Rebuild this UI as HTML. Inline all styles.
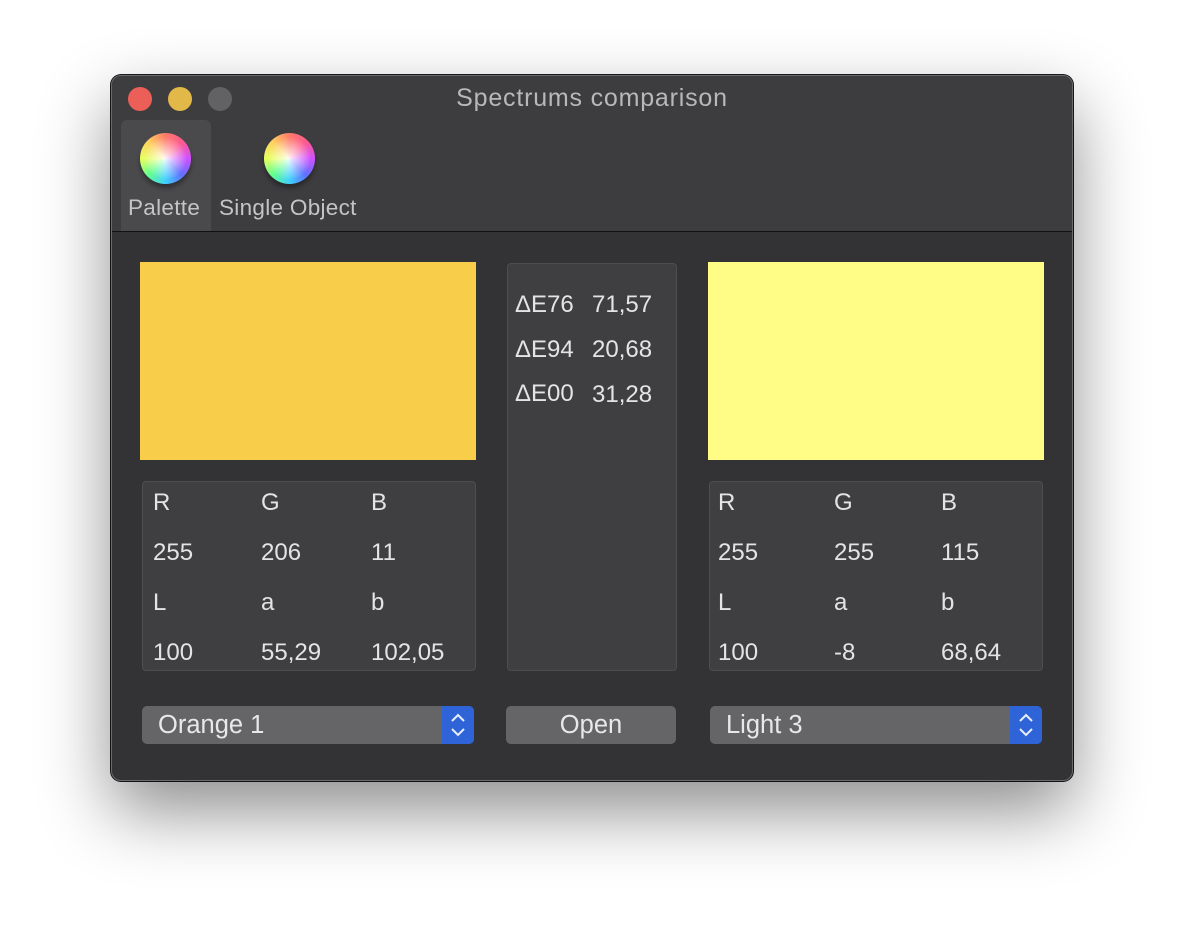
<!DOCTYPE html>
<html><head><style>
*{margin:0;padding:0;box-sizing:border-box}
body{width:1184px;height:928px;background:#fff;position:relative;overflow:hidden;font-family:"Liberation Sans",sans-serif;}
.win{position:absolute;left:111px;top:75px;width:962px;height:706px;border-radius:10px;background:#333336;border:1px solid #6a6a6c;box-shadow:0 30px 70px rgba(0,0,0,.45),0 0 0 1px #1a1a1a;overflow:hidden}
.top{position:absolute;left:0;top:0;width:100%;height:156px;background:#3d3d40;border-bottom:1px solid #111}
.dot{position:absolute;top:11px;width:24px;height:24px;border-radius:50%}
.title{position:absolute;top:8px;left:0;width:100%;text-align:center;color:#b8b8b8;font-size:25px;letter-spacing:.8px}
.tab{position:absolute;top:44px;height:111px;border-radius:6px 6px 0 0}
.ball{position:absolute;top:12px;width:51px;height:51px;border-radius:50%;background:radial-gradient(circle at 50% 50%,rgba(255,255,255,.9) 0,rgba(255,255,255,0) 60%),conic-gradient(from 0deg,#ff7a6a,#ff5a90,#d050ff,#6070ff,#40d0ff,#60ff90,#e8ff60,#ffd060,#ff7a6a);box-shadow:0 4px 5px rgba(0,0,0,.35)}
.tl{position:absolute;color:#c4c4c4;font-size:22.5px;white-space:nowrap;letter-spacing:.3px}
.sw{position:absolute;top:186px;width:336px;height:198px}
.box{position:absolute;background:#3f3f42;border:1px solid #4d4d50;border-radius:4px;color:#e4e4e4;font-size:24px}
.box span{position:absolute}
.pop{position:absolute;top:630px;height:38px;background:#656567;border-radius:5px;color:#e8e8e8;font-size:25.5px;padding:5px 0 0 16px}
.arr{position:absolute;right:0;top:0;width:32px;height:38px;background:#2e64d8;border-radius:0 5px 5px 0}
</style></head><body>
<div class="win">
<div class="top">
<div class="dot" style="left:16px;background:#ec5f58"></div>
<div class="dot" style="left:56px;background:#e2b948"></div>
<div class="dot" style="left:96px;background:#626265"></div>
<div class="title">Spectrums comparison</div>
<div class="tab" style="left:9px;width:90px;background:#4a4a4d"></div>
<div class="ball" style="left:28px;top:57px"></div>
<div class="ball" style="left:152px;top:57px"></div>
<div class="tl" style="left:16px;top:119px">Palette</div>
<div class="tl" style="left:107px;top:119px">Single Object</div>
</div>
<div class="sw" style="left:28px;background:#f7cd4a"></div>
<div class="sw" style="left:596px;background:#fffd86"></div>
<div class="box" style="left:395px;top:187px;width:170px;height:408px">
<span style="left:7px;top:27px">ΔE76</span><span style="left:84px;top:27px">71,57</span>
<span style="left:7px;top:72px">ΔE94</span><span style="left:84px;top:72px">20,68</span>
<span style="left:7px;top:116px">ΔE00</span><span style="left:84px;top:117px">31,28</span>
</div>
<div class="box" style="left:30px;top:405px;width:334px;height:190px">
<span style="left:10px;top:7px">R</span><span style="left:118px;top:7px">G</span><span style="left:228px;top:7px">B</span>
<span style="left:10px;top:57px">255</span><span style="left:118px;top:57px">206</span><span style="left:228px;top:57px">11</span>
<span style="left:10px;top:107px">L</span><span style="left:118px;top:107px">a</span><span style="left:228px;top:107px">b</span>
<span style="left:10px;top:157px">100</span><span style="left:118px;top:157px">55,29</span><span style="left:228px;top:157px">102,05</span>
</div>
<div class="box" style="left:597px;top:405px;width:334px;height:190px">
<span style="left:8px;top:7px">R</span><span style="left:124px;top:7px">G</span><span style="left:231px;top:7px">B</span>
<span style="left:8px;top:57px">255</span><span style="left:124px;top:57px">255</span><span style="left:231px;top:57px">115</span>
<span style="left:8px;top:107px">L</span><span style="left:124px;top:107px">a</span><span style="left:231px;top:107px">b</span>
<span style="left:8px;top:157px">100</span><span style="left:124px;top:157px">-8</span><span style="left:231px;top:157px">68,64</span>
</div>
<div class="pop" style="left:30px;width:332px">Orange 1<div class="arr"><svg width="32" height="38"><path d="M10 15l6-6 6 6M10 23l6 6 6-6" stroke="#e8eefc" stroke-width="2" fill="none"/></svg></div></div>
<div class="pop" style="left:394px;width:170px;padding-left:0;text-align:center">Open</div>
<div class="pop" style="left:598px;width:332px">Light 3<div class="arr"><svg width="32" height="38"><path d="M10 15l6-6 6 6M10 23l6 6 6-6" stroke="#e8eefc" stroke-width="2" fill="none"/></svg></div></div>
</div>
</body></html>
